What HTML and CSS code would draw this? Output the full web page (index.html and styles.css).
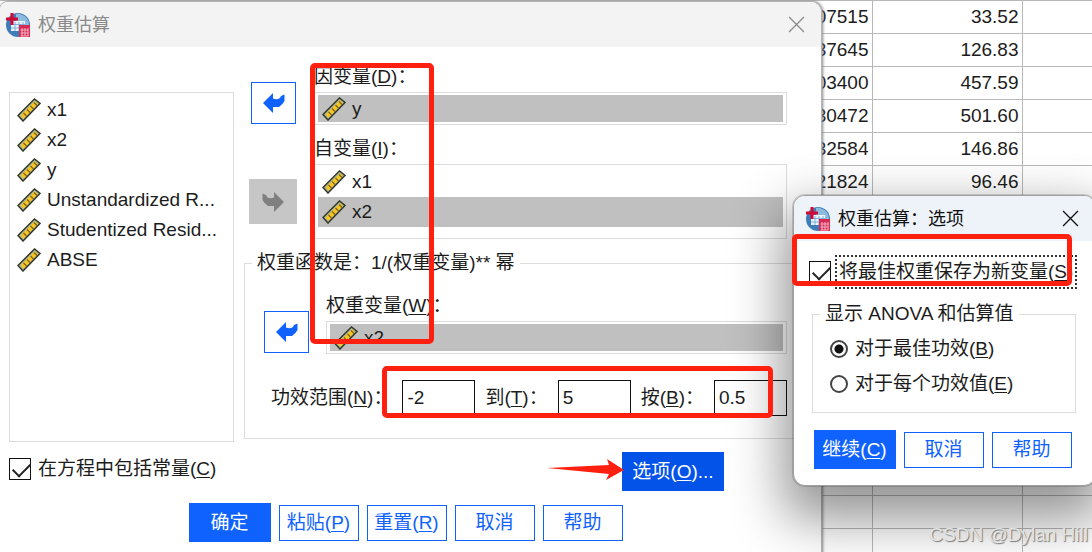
FILE: index.html
```html
<!DOCTYPE html>
<html lang="zh-CN">

<head>
    <meta charset="UTF-8">
    <meta name="viewport" content="width=device-width, initial-scale=1.0">
    <title>权重估算</title>
    <link rel="stylesheet" href="styles.css">
</head>

<body>
    <!-- 公用图标 -->
    <svg class="defs" width="0" height="0" aria-hidden="true">
        <symbol id="ruler" viewBox="0 0 24 24">
            <path d="M1 17.500 17.500 1 23 5.500 6 23Z" fill="#b4bb8c" stroke="#34382a" stroke-width="1.500" />
            <path d="M4 17.500 18 3.500 20.500 6 6.500 20.500Z" fill="#fcc419" />
            <path d="M6.500 15l3 3M10 11.500l3 3M13.500 8l3 3M17 4.500l3 3" stroke="#77621a" stroke-width="1.100" />
        </symbol>
        <symbol id="back" viewBox="0 0 22 20">
            <path d="M0 10 10 0V5.500Q16 8 18 3L21.500 1.500V8Q20 11 16 14H10V20Z" fill="currentColor" />
        </symbol>
        <symbol id="close" viewBox="0 0 16 16">
            <path d="M1 1 15 15M15 1 1 15" stroke="currentColor" stroke-width="1.200" />
        </symbol>
        <symbol id="logo" viewBox="0 0 24 24">
            <circle cx="12" cy="12" r="12" fill="#3f7db8" />
            <path d="M10 1a11 11 0 0 1 13 11h-13Z" fill="#8dbbe0" />
            <path d="M5 8h14v10H5z" fill="#eaf4fc" />
            <path d="M5 11.500h14M5 15h14M9 9v9M13 9v9M17 9v9" stroke="#7fb0da" />
            <path d="M4.500 0h3v4.500H12v3H7.500V12h-3V7.500H0v-3h4.500Z" fill="#cf0a35" />
            <path d="M13 12h11v12H13z" fill="#d62a55" />
            <path d="M14.500 17h8M14.500 20h8M14.500 23h8M16 15v8M19 15v8M22 15v8" stroke="#f3b3c2" />
        </symbol>
    </svg>

    <table class="sheet">
        <tr><td>1.07515</td><td>33.52</td><td></td></tr>
        <tr><td>1.37645</td><td>126.83</td><td></td></tr>
        <tr><td>1.03400</td><td>457.59</td><td></td></tr>
        <tr><td>1.30472</td><td>501.60</td><td></td></tr>
        <tr><td>1.32584</td><td>146.86</td><td></td></tr>
        <tr><td>1.21824</td><td>96.46</td><td></td></tr>
        <tr><td></td><td></td><td></td></tr>
        <tr><td></td><td></td><td></td></tr>
        <tr><td></td><td></td><td></td></tr>
        <tr><td></td><td></td><td></td></tr>
        <tr><td></td><td></td><td></td></tr>
        <tr><td></td><td></td><td></td></tr>
        <tr><td></td><td></td><td></td></tr>
        <tr><td></td><td></td><td></td></tr>
        <tr><td></td><td></td><td></td></tr>
        <tr><td></td><td></td><td></td></tr>
        <tr><td></td><td></td><td></td></tr>
    </table>

    <!-- 主对话框 -->
    <div class="window main">
        <div class="titlebar">
            <svg class="logo"><use href="#logo" /></svg>
            <span class="title">权重估算</span>
            <button class="close" aria-label="关闭"><svg><use href="#close" /></svg></button>
        </div>
        <div class="content">
            <ul class="list source">
                <li><svg><use href="#ruler" /></svg>x1</li>
                <li><svg><use href="#ruler" /></svg>x2</li>
                <li><svg><use href="#ruler" /></svg>y</li>
                <li><svg><use href="#ruler" /></svg>Unstandardized R...</li>
                <li><svg><use href="#ruler" /></svg>Studentized Resid...</li>
                <li><svg><use href="#ruler" /></svg>ABSE</li>
            </ul>
            <div class="fields">
                <div class="row">
                    <button class="move" aria-label="移回因变量"><svg><use href="#back" /></svg></button>
                    <div class="field">
                        <span class="label">因变量(<u>D</u>)：</span>
                        <ul class="list">
                            <li class="selected"><svg><use href="#ruler" /></svg>y</li>
                        </ul>
                    </div>
                </div>
                <div class="row indep">
                    <button class="move" aria-label="移入自变量" disabled><svg><use href="#back" /></svg></button>
                    <div class="field">
                        <span class="label">自变量(<u>I</u>)：</span>
                        <ul class="list tall">
                            <li><svg><use href="#ruler" /></svg>x1</li>
                            <li class="selected"><svg><use href="#ruler" /></svg>x2</li>
                        </ul>
                    </div>
                </div>
                <fieldset class="group weight">
                    <legend>权重函数是：1/(权重变量)** 幂</legend>
                    <div class="row">
                        <button class="move" aria-label="移回权重变量"><svg><use href="#back" /></svg></button>
                        <div class="field">
                            <span class="label">权重变量(<u>W</u>)：</span>
                            <ul class="list">
                                <li class="selected"><svg><use href="#ruler" /></svg>x2</li>
                            </ul>
                        </div>
                    </div>
                    <div class="range">
                        <label for="from">功效范围(<u>N</u>)：</label>
                        <input id="from" type="text" value="-2">
                        <label for="to">到(<u>T</u>)：</label>
                        <input id="to" type="text" value="5">
                        <label for="by">按(<u>B</u>)：</label>
                        <input id="by" type="text" value="0.5">
                    </div>
                </fieldset>
            </div>
        </div>
        <div class="extras">
            <label class="check"><input type="checkbox" checked><span>在方程中包括常量(<u>C</u>)</span></label>
            <button class="btn options">选项(<u>O</u>)...</button>
        </div>
        <div class="actions">
            <button class="btn primary">确定</button>
            <button class="btn">粘贴(<u>P</u>)</button>
            <button class="btn">重置(<u>R</u>)</button>
            <button class="btn">取消</button>
            <button class="btn">帮助</button>
        </div>
    </div>

    <!-- 选项对话框 -->
    <div class="window sub">
        <div class="titlebar">
            <svg class="logo"><use href="#logo" /></svg>
            <span class="title">权重估算：选项</span>
            <button class="close" aria-label="关闭"><svg><use href="#close" /></svg></button>
        </div>
        <div class="sub-body">
            <label class="check"><input type="checkbox" checked><span class="focus">将最佳权重保存为新变量(<u>S</u>)</span></label>
            <fieldset class="group anova">
                <legend>显示 ANOVA 和估算值</legend>
                <label class="check"><input type="radio" name="power" checked><span>对于最佳功效(<u>B</u>)</span></label>
                <label class="check"><input type="radio" name="power"><span>对于每个功效值(<u>E</u>)</span></label>
            </fieldset>
        </div>
        <div class="actions">
            <button class="btn primary">继续(<u>C</u>)</button>
            <button class="btn">取消</button>
            <button class="btn">帮助</button>
        </div>
    </div>

    <!-- 红色标注 -->
    <div class="mark mark-vars"></div>
    <div class="mark mark-range"></div>
    <div class="mark mark-save"></div>
    <svg class="arrow" viewBox="0 0 77 22"><path d="M0 9 62 6 60 0 77 11 59 21 62 15Z" fill="#ff2010" /></svg>
    <div class="watermark">CSDN @Dylan Hill</div>
</body>

</html>
```
FILE: styles.css
```css
* {
    box-sizing: border-box;
}

body {
    position: relative;
    height: 100vh;
    margin: 0;
    overflow: hidden;
    background: #fff;
    color: #1c1c1c;
    font: 19px/24px "Liberation Sans", "Noto Sans CJK SC", sans-serif;
}

button,
input {
    font: inherit;
    color: inherit;
}

ul {
    list-style: none;
    margin: 0;
    padding: 0;
}

u {
    text-underline-offset: 2px;
}

.defs {
    position: absolute;
}

/* 数据表 */
.sheet {
    width: 100%;
    border-collapse: collapse;
    table-layout: fixed;
}

.sheet td {
    height: 33px;
    padding: 0 3px;
    border: 1px solid #b8b8b8;
    border-left: 0;
    text-align: right;
}

.sheet td:nth-child(2) {
    width: 150px;
}

.sheet td:nth-child(3) {
    width: 70px;
    border-right: 0;
}

/* 窗口 */
.window {
    position: absolute;
    background: #fff;
    overflow: hidden;
}

.main {
    top: 2px;
    left: 0;
    right: 271px;
    min-height: 100%;
    border-radius: 8px 10px 0 0;
    box-shadow: 0 0 0 1px #b5b5b5, 1px 0 3px 1px #888;
}

.sub {
    top: 195px;
    left: 793px;
    right: -4px;
    border: 1px solid #a0a0a0;
    border-radius: 12px;
    box-shadow: 0 0 0 1px rgba(0, 0, 0, 0.15), 0 24px 52px 10px rgba(0, 0, 0, 0.42);
}

.titlebar {
    display: flex;
    align-items: center;
    gap: 8px;
    height: 45px;
    padding: 0 16px 0 6px;
    background: #f3f3f3;
    color: #8a8a8a;
    font-size: 18px;
}

.title {
    flex: 1;
}

.logo {
    width: 24px;
    height: 24px;
}

.close {
    display: flex;
    padding: 0;
    border: 0;
    background: none;
}

.close svg {
    width: 17px;
    height: 17px;
}

.sub .titlebar {
    padding: 0 16px 0 12px;
    background: #eef3fa;
    color: #111;
}

/* 变量列表 */
.content {
    display: flex;
    gap: 10px;
    padding: 18px 24px 0 9px;
}

.list {
    padding: 2px 3px;
    border: 1px solid #dcdcdc;
}

.list li {
    display: flex;
    align-items: center;
    gap: 6px;
    height: 27px;
    padding-left: 4px;
    white-space: nowrap;
}

.list svg {
    width: 24px;
    height: 24px;
}

.selected {
    background: #c0c0c0;
}

.source {
    width: 225px;
    height: 350px;
    margin-top: 27px;
}

.source li,
.tall li {
    height: 30px;
}

.tall {
    height: 75px;
}

.fields {
    flex: 1;
}

.row {
    display: flex;
    gap: 18px;
    padding: 0 10px 0 7px;
}

.field {
    flex: 1;
}

.label {
    display: block;
    margin-bottom: 3px;
}

.move {
    display: flex;
    align-items: center;
    justify-content: center;
    width: 45px;
    height: 42px;
    margin-top: 17px;
    padding: 0;
    border: 1px solid #0f62fe;
    background: #fff;
    color: #0f62fe;
}

.move svg {
    width: 22px;
    height: 20px;
}

.move:disabled {
    width: 48px;
    height: 45px;
    margin-top: 42px;
    border: 0;
    background: #c6c6c6;
    color: #808080;
}

.move:disabled svg {
    transform: scaleX(-1);
}

.indep {
    gap: 17px;
    padding-left: 5px;
    margin-top: 12px;
}

.group {
    margin: 0;
    padding: 0;
    border: 1px solid #dcdcdc;
}

.group legend {
    margin-left: 7px;
    padding: 0 5px;
}

.weight {
    height: 188px;
    margin-top: 12px;
}

.weight .row {
    gap: 17px;
    padding: 19px 9px 0 19px;
}

.range {
    display: flex;
    align-items: center;
    justify-content: space-between;
    padding: 26px 9px 0 26px;
}

.range input {
    width: 73px;
    height: 36px;
    padding: 0 4px;
    border: 1px solid #111;
    background: #fff;
}

/* 勾选与单选 */
.check {
    display: flex;
    align-items: center;
    gap: 7px;
    white-space: nowrap;
}

.check input {
    appearance: none;
    width: 22px;
    height: 22px;
    margin: 0;
    border: 1px solid #111;
    background: #fff;
}

.check input[type="checkbox"]:checked::before {
    content: "";
    display: block;
    width: 15px;
    height: 8px;
    margin: 4px 0 0 3px;
    border: solid #222;
    border-width: 0 0 2px 2px;
    transform: rotate(-45deg);
}

.check input[type="radio"] {
    width: 18px;
    height: 18px;
    border: 2px solid #444;
    border-radius: 50%;
}

.check input[type="radio"]:checked {
    background: radial-gradient(#111 0 4px, #fff 5px);
}

.focus {
    padding: 3px 2px;
    border: 2px dotted #333;
}

/* 按钮 */
.btn {
    width: 80px;
    height: 36px;
    padding: 0;
    border: 1px solid #0f62fe;
    background: #fff;
    color: #0f62fe;
    white-space: nowrap;
}

.primary,
.options {
    width: 82px;
    height: 39px;
    border: 0;
    background: #0f62fe;
    color: #fff;
}

.options {
    width: 102px;
    background: #0353e9;
}

.extras {
    display: flex;
    justify-content: space-between;
    padding: 10px 97px 0 9px;
}

.extras .check {
    height: 34px;
}

.actions {
    display: flex;
    align-items: center;
    justify-content: center;
    gap: 8px;
    padding: 12px 10px 0 0;
}

.sub-body {
    padding: 14px 19px 0 15px;
}

.sub .check {
    gap: 4px;
}

.anova {
    height: 111px;
    margin: 13px 0 0 3px;
}

.anova .check {
    gap: 7px;
    height: 35px;
    padding-left: 17px;
}

.anova legend {
    margin-bottom: 5px;
}

.sub .actions {
    padding: 17px 4px 16px 0;
}

/* 标注 */
.mark {
    position: absolute;
    border: 5px solid #ff2010;
    border-radius: 5px;
}

.mark-vars {
    top: 63px;
    left: 310px;
    width: 124px;
    height: 281px;
}

.mark-range {
    top: 366px;
    left: 382px;
    width: 391px;
    height: 52px;
}

.mark-save {
    top: 234px;
    left: 792px;
    width: 280px;
    height: 52px;
}

.arrow {
    position: absolute;
    top: 459px;
    left: 547px;
    width: 77px;
    height: 22px;
}

.watermark {
    position: absolute;
    right: 4px;
    bottom: 5px;
    color: #e4e4e4;
    text-shadow: 1px 1px 1px #777;
}
```
